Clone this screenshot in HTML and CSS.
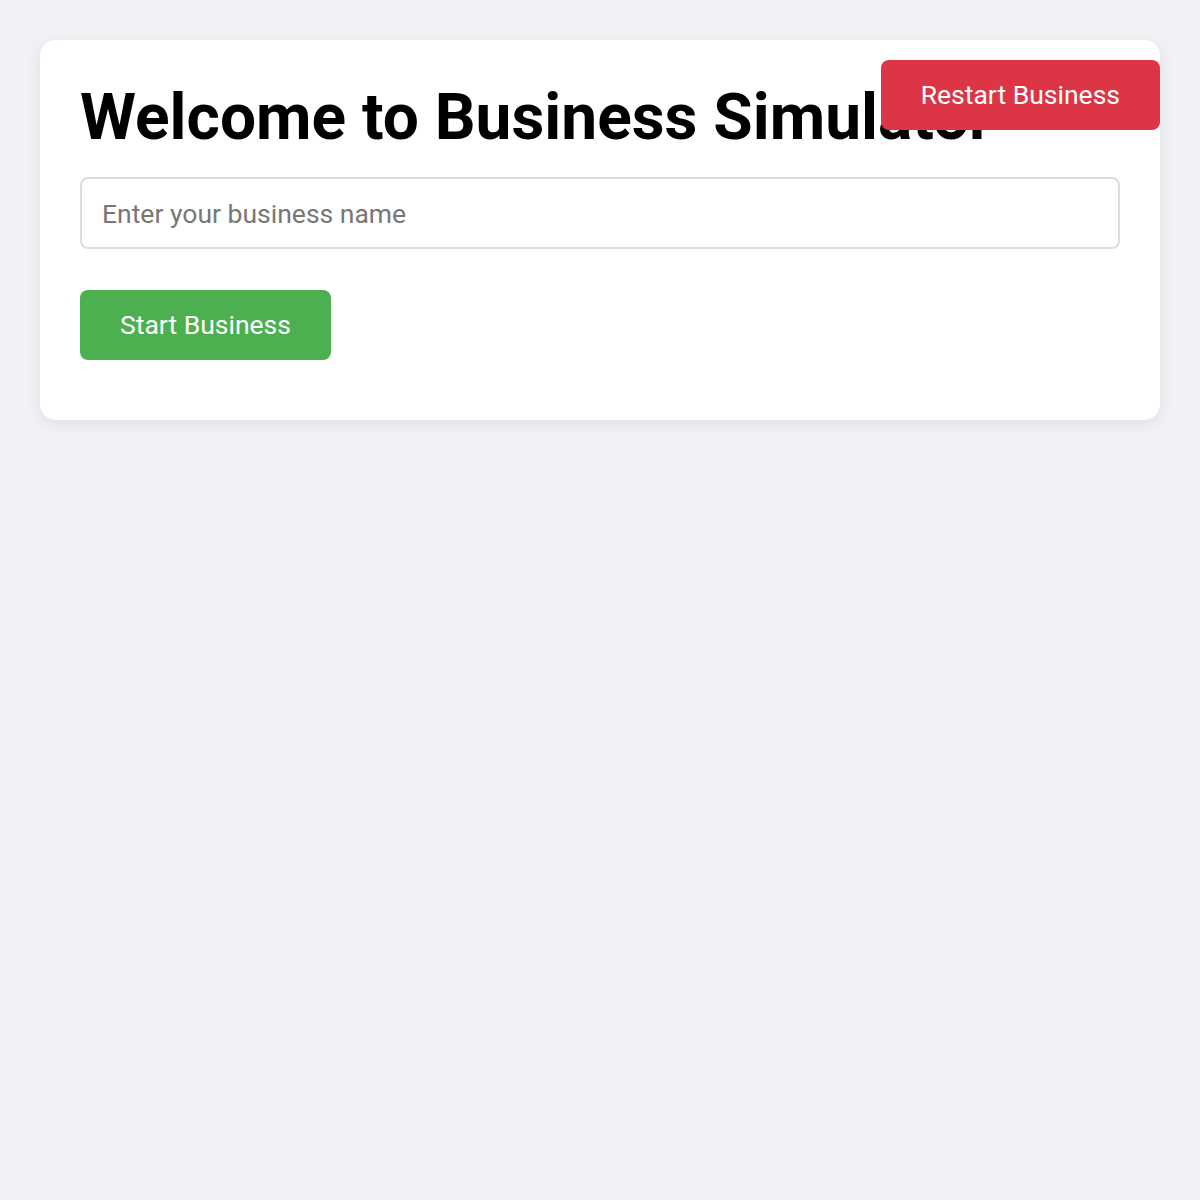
FILE: index.html
```html
<!DOCTYPE html>
<html lang="en">
<head>
<meta charset="utf-8">
<title>Business Simulator</title>
<link rel="stylesheet" href="styles.css">
</head>
<body>
<main class="card">
  <h1 class="title">Welcome to Business Simulator</h1>
  <input class="name-input" type="text" placeholder="Enter your business name">
  <button class="btn btn-start">Start Business</button>
</main>
<button class="btn btn-restart">Restart Business</button>
</body>
</html>
```
FILE: styles.css
```css
* { box-sizing: border-box; }
html, body { margin: 0; padding: 0; }
body {
  background: #f0f2f5;
  font-family: Roboto, "Liberation Sans", sans-serif;
  padding: 40px;
  min-height: 1200px;
}
.card {
  background: #fff;
  border-radius: 16px;
  box-shadow: 0 4px 16px rgba(0, 0, 0, 0.08);
  padding: 40px;
  display: flex;
  flex-direction: column;
  align-items: flex-start;
}
.title {
  margin: 0 0 22px;
  height: 75px;
  font-size: 64px;
  font-weight: 700;
  line-height: 75px;
  color: #000;
}
.name-input {
  width: 100%;
  height: 72px;
  padding: 0 20px;
  border: 2px solid #ddd;
  border-radius: 8px;
  font-family: inherit;
  font-size: 26.5px;
  color: #333;
  margin: 0 0 41px;
  outline: none;
}
.name-input::placeholder { color: #777; }
.btn {
  border: none;
  border-radius: 8px;
  color: #fff;
  font-family: Roboto, "Liberation Sans", sans-serif;
  font-size: 26.5px;
  line-height: 30px;
  height: 70px;
  padding: 20px 40px;
  cursor: pointer;
}
.btn-start {
  background: #4caf50;
  margin-bottom: 20px;
}
.btn-restart {
  position: fixed;
  top: 60px;
  right: 40px;
  background: #dc3545;
}
```
